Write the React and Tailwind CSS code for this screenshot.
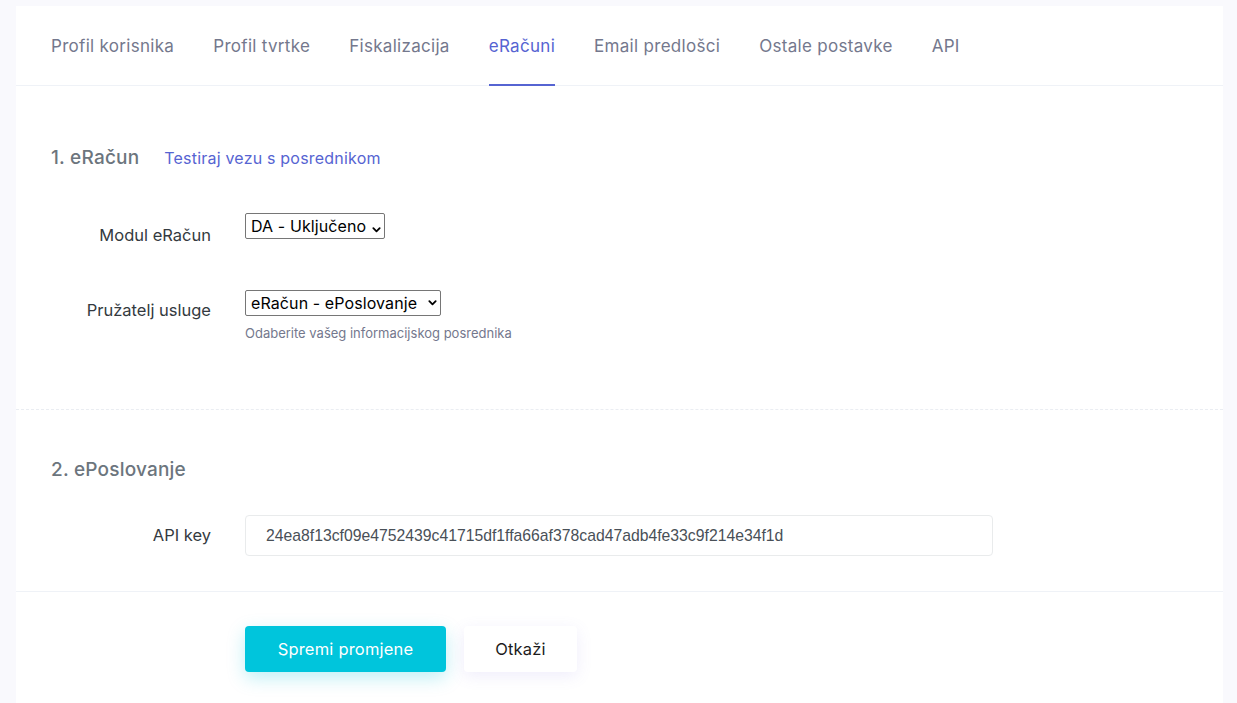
import { useState } from "react";

const tabs = [
  "Profil korisnika",
  "Profil tvrtke",
  "Fiskalizacija",
  "eRačuni",
  "Email predlošci",
  "Ostale postavke",
  "API",
];

function Chevron() {
  return (
    <svg viewBox="0 0 10 6" className="pointer-events-none absolute right-[4px] top-1/2 h-[6px] w-[9px] -translate-y-1/2" fill="none">
      <path d="M1.5 1l3.5 3.5L8.5 1" stroke="#000" strokeWidth="2" strokeLinecap="round" strokeLinejoin="round" />
    </svg>
  );
}

function Select({ value, options, width }) {
  return (
    <div className={`relative ${width}`}>
      <select
        defaultValue={value}
        className="h-[26px] w-full appearance-none rounded-[2px] border border-[#767676] bg-white pl-[5px] pr-[16px] text-[16px] leading-[24px] tracking-[0.1px] text-black"
      >
        {options.map((o) => (
          <option key={o}>{o}</option>
        ))}
      </select>
      <Chevron />
    </div>
  );
}

export default function App() {
  const [active, setActive] = useState("eRačuni");

  return (
    <div className="min-h-[703px] bg-[#f9f9fd] pl-[16px] pr-[14px] pt-[6px] font-['Inter',sans-serif]">
      <div className="min-h-[697px] bg-white">
        {/* tab bar */}
        <div className="flex h-[80px] gap-[39px] border-b border-[#eff2f7] px-[35px]">
          {tabs.map((t) => (
            <button
              key={t}
              type="button"
              onClick={() => setActive(t)}
              className={
                t === active
                  ? "-mb-px flex items-center border-b-2 border-[#5664d2] pt-[4px] text-[17px] tracking-[0.3px] text-[#5664d2]"
                  : "flex items-center pt-[2px] text-[17px] tracking-[0.3px] text-[#74788d]"
              }
            >
              {t}
            </button>
          ))}
        </div>

        {/* 1. eRačun */}
        <div className="border-b border-dashed border-[#eaedf2] px-[35px] pt-[58px] pb-[67px]">
          <div className="flex items-center gap-[25px]">
            <h4 className="text-[19px] font-medium leading-[27px] tracking-[0.2px] text-[#6c757d]">1. eRačun</h4>
            <a href="#" className="text-[16px] tracking-[0.2px] text-[#5664d2]">
              Testiraj vezu s posrednikom
            </a>
          </div>

          <div className="mt-[42px] flex gap-[34px]">
            <label className="w-[160px] pt-[10px] text-right text-[16.5px] leading-[24px] text-[#343a40]">Modul eRačun</label>
            <Select value="DA - Uključeno" options={["DA - Uključeno", "NE - Isključeno"]} width="w-[140px]" />
          </div>

          <div className="mt-[43px] flex gap-[34px]">
            <label className="w-[160px] pt-[8px] text-right text-[16.5px] leading-[24px] text-[#343a40]">Pružatelj usluge</label>
            <div>
              <Select value="eRačun - ePoslovanje" options={["eRačun - ePoslovanje", "eRačun - Moj-eRačun"]} width="w-[196px]" />
              <p className="mt-[8px] text-[13px] leading-[18px] text-[#74788d]">Odaberite vašeg informacijskog posrednika</p>
            </div>
          </div>
        </div>

        {/* 2. ePoslovanje */}
        <div className="border-b border-[#eff2f7] px-[35px] pt-[46px] pb-[35px]">
          <h4 className="text-[19px] font-medium leading-[27px] tracking-[0.2px] text-[#6c757d]">2. ePoslovanje</h4>
          <div className="mt-[32px] flex items-center gap-[34px]">
            <label className="w-[160px] text-right text-[16.5px] text-[#343a40]">API key</label>
            <input
              type="text"
              defaultValue="24ea8f13cf09e4752439c41715df1ffa66af378cad47adb4fe33c9f214e34f1d"
              className="h-[41px] w-[748px] rounded-[4px] border border-[#e9ebec] px-[20px] font-['Liberation_Sans',sans-serif] text-[15.75px] text-[#495057] outline-none"
            />
          </div>
        </div>

        {/* actions */}
        <div className="flex gap-[18px] pt-[34px] pl-[229px]">
          <button
            type="button"
            className="h-[46px] w-[201px] rounded-[4px] bg-[#00c5dc] text-[16.5px] tracking-[0.2px] text-white shadow-[0_6px_18px_rgba(0,197,220,0.25)]"
          >
            Spremi promjene
          </button>
          <button
            type="button"
            className="h-[46px] w-[113px] rounded-[4px] bg-white text-[16.5px] tracking-[0.2px] text-[#1c1c1c] shadow-[0_4px_16px_rgba(120,110,220,0.12)]"
          >
            Otkaži
          </button>
        </div>
      </div>
    </div>
  );
}
